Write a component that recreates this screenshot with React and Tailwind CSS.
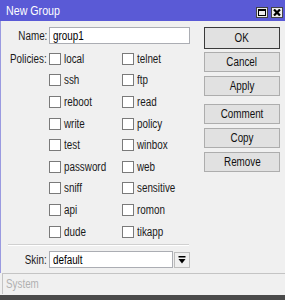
import React from 'react';

const font = { fontFamily: '"Liberation Sans", Arial, sans-serif' };

const left = ['local', 'ssh', 'reboot', 'write', 'test', 'password', 'sniff', 'api', 'dude'];
const right = ['telnet', 'ftp', 'read', 'policy', 'winbox', 'web', 'sensitive', 'romon', 'tikapp'];

// narrow text, the dialog font is condensed
function T({ children, origin = 'origin-left', className = '' }) {
  return <span className={`inline-block whitespace-nowrap scale-x-[0.82] ${origin} ${className}`}>{children}</span>;
}

function Check({ label }) {
  return (
    <div className="flex items-center h-[21.6px]">
      <span className="w-[12px] h-[12px] bg-white border border-[#7a7a7a] shrink-0" />
      <span className="ml-[3px] text-[12px] text-[#1a1a1a] leading-none"><T>{label}</T></span>
    </div>
  );
}

function Btn({ children, main, className = '' }) {
  return (
    <div
      className={`w-[76px] flex items-center justify-center bg-[#e1e1e1] text-[12px] text-[#111] border ${
        main ? 'h-[22px] border-[#3a3a3a]' : 'h-[20px] border-[#adadad]'
      } ${className}`}
    >
      <T origin="origin-center">{children}</T>
    </div>
  );
}

export default function App() {
  return (
    <div style={font} className="w-[285px] h-[300px] bg-[#f0f0f0] flex flex-col overflow-hidden">
      {/* title bar */}
      <div className="h-[21px] bg-[#5a5ad6] flex items-center pl-[6px] pr-[2px] shrink-0">
        <span className="text-white text-[13px] leading-none flex-1"><T>New Group</T></span>
        <div className="flex gap-[3px] mt-[3px]">
          <div className="w-[12px] h-[11px] bg-[#ececec] border border-[#444] flex items-center justify-center">
            <span className="w-[8px] h-[7px] border border-black border-t-2" />
          </div>
          <div className="w-[12px] h-[11px] bg-[#ececec] border border-[#444] flex items-center justify-center">
            <svg width="8" height="7" viewBox="0 0 8 7">
              <path d="M1 0.5 L7 6.5 M7 0.5 L1 6.5" stroke="#000" strokeWidth="2.2" />
            </svg>
          </div>
        </div>
      </div>

      {/* body */}
      <div className="flex h-[252px] border-l border-[#9a9ae0]">
        <div className="w-[203px] pt-[6px] flex flex-col">
          <div className="flex items-center h-[17px]">
            <span className="w-[46px] text-right text-[12px] text-[#1a1a1a]"><T origin="origin-right">Name:</T></span>
            <div className="ml-[2px] w-[141px] h-[17px] bg-white border border-[#abadb3] flex items-center pl-[3px] text-[12px]">
              <T>group1</T>
            </div>
          </div>
          <div className="flex mt-[4px]">
            <div className="w-[46px] text-right text-[12px] text-[#1a1a1a] h-[21.6px] flex items-center justify-end">
              <T origin="origin-right">Policies:</T>
            </div>
            <div className="ml-[2px] w-[73px]">
              {left.map(l => <Check key={l} label={l} />)}
            </div>
            <div>
              {right.map(l => <Check key={l} label={l} />)}
            </div>
          </div>
          <div className="ml-[7px] w-[181px] h-[1px] bg-[#d0d0d0] mt-[2px] border-b border-white box-content" />
          <div className="flex items-center h-[17px] mt-[5px]">
            <span className="w-[46px] text-right text-[12px] text-[#1a1a1a]"><T origin="origin-right">Skin:</T></span>
            <div className="ml-[2px] w-[124px] h-[17px] bg-white border border-[#abadb3] flex items-center pl-[3px] text-[12px]">
              <T>default</T>
            </div>
            <div className="ml-[1px] w-[16px] h-[16px] bg-[#f0f0f0] border border-[#bdbdbd] flex items-center justify-center">
              <svg width="8" height="8" viewBox="0 0 8 8">
                <rect x="0.5" y="0" width="7" height="1.5" fill="#000" />
                <path d="M0.5 3 H7.5 L4 7.5 Z" fill="#000" />
              </svg>
            </div>
          </div>
        </div>

        <div className="pt-[6px] flex flex-col">
          <Btn main>OK</Btn>
          <Btn className="mt-[3px]">Cancel</Btn>
          <Btn className="mt-[4px]">Apply</Btn>
          <Btn className="mt-[8px]">Comment</Btn>
          <Btn className="mt-[4px]">Copy</Btn>
          <Btn className="mt-[4px]">Remove</Btn>
        </div>
      </div>

      {/* status bar */}
      <div className="h-[21px] ml-[2px] border-t border-l border-[#c4c4c4] flex items-center pl-[3px] text-[12px] text-[#b0b0b0]">
        <T>System</T>
      </div>
      <div className="flex-1 bg-[#f0f0f0] border-b-[5px] border-[#4a4a4a]" />
    </div>
  );
}
